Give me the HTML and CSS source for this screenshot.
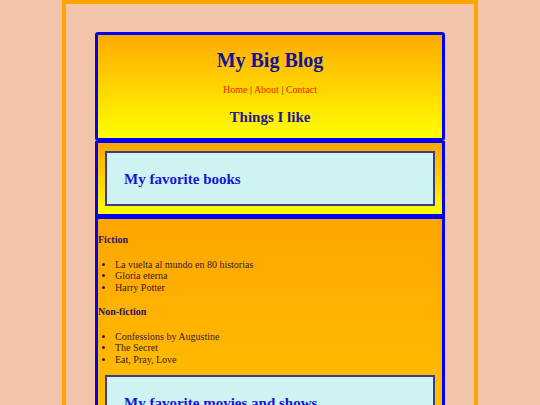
FILE: index.html
```html
<!DOCTYPE html>
<html>
<head>
<meta charset="utf-8">
<title>My Big Blog</title>
<link rel="stylesheet" href="styles.css">
</head>
<body>
<div class="page">
  <header class="masthead">
    <h1 class="title">My Big Blog</h1>
    <p class="nav"><a href="#">Home</a> | <a href="#">About</a> | <a href="#">Contact</a></p>
    <h2 class="subtitle">Things I like</h2>
  </header>
  <section class="panel">
    <h2 class="card">My favorite books</h2>
  </section>
  <section class="panel panel-long">
    <h4 class="group">Fiction</h4>
    <ul class="list">
      <li>La vuelta al mundo en 80 historias</li>
      <li>Gloria eterna</li>
      <li>Harry Potter</li>
    </ul>
    <h4 class="group">Non-fiction</h4>
    <ul class="list">
      <li>Confessions by Augustine</li>
      <li>The Secret</li>
      <li>Eat, Pray, Love</li>
    </ul>
    <h2 class="card">My favorite movies and shows</h2>
  </section>
</div>
</body>
</html>
```
FILE: styles.css
```css
html, body {
  margin: 0;
  padding: 0;
}
body {
  background: #f2c5ab;
  font-family: "Liberation Serif", "Times New Roman", serif;
  font-size: 10px;
  color: #2a1446;
}
.page {
  width: 350px;
  margin: 0 auto;
  border: 4px solid #ffa500;
  border-bottom: none;
  padding: 28px 29px 40px;
}
.masthead {
  border: 3px solid #0000ff;
  border-radius: 3px;
  background: linear-gradient(#ffaa00, #ffff00);
  text-align: center;
  padding: 1px 0;
}
.title {
  margin: 13px 0 12px;
  font-size: 20px;
  line-height: 23px;
  color: #12129a;
}
.nav {
  margin: 0 0 13px;
  font-size: 10px;
  line-height: 11.5px;
  color: #5a1a00;
}
.nav a {
  color: #ee2200;
  text-decoration: none;
}
.subtitle {
  margin: 0 0 11px;
  font-size: 15px;
  line-height: 17.25px;
  color: #1c1c8c;
}
.panel {
  border: 3px solid #0000ff;
  border-top-width: 2px;
  background: linear-gradient(#ffa500, #ffff00);
  padding: 8px 7px;
}
.panel-long {
  padding: 2px 0 0;
  background: linear-gradient(#ffa500 0px, #ffc000 200px, #ffff00 420px);
}
.card {
  margin: 0;
  background: #cff2f2;
  border: 2px solid #3b3b88;
  padding: 18px 17px 16px;
  font-size: 15px;
  line-height: 17.25px;
  color: #1515d8;
}
.panel-long .card {
  margin: 10px 7px 0;
}
.group {
  margin: 13px 0 13px;
  font-size: 10px;
  line-height: 11.5px;
  color: #2a1466;
}
.list {
  margin: 0;
  padding-left: 17px;
  line-height: 11.5px;
  color: #3a1a30;
}
```
